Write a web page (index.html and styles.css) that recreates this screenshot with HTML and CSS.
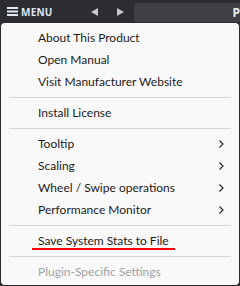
FILE: index.html
```html
<!DOCTYPE html>
<html lang="en">
<head>
    <meta charset="UTF-8">
    <title>Menu</title>
    <link rel="stylesheet" href="styles.css">
</head>
<body>
    <!-- Top bar -->
    <div class="topbar">
        <div class="menu-btn">
            <svg width="11" height="9" viewBox="0 0 11 9"><rect y="0" width="11" height="2" fill="#e2e7f0"/><rect y="3.5" width="11" height="2" fill="#e2e7f0"/><rect y="7" width="11" height="2" fill="#e2e7f0"/></svg>
            <span>MENU</span>
        </div>
        <div class="arrows">
            <svg width="7" height="8" viewBox="0 0 7 8"><polygon points="7,0 7,8 0,4" fill="#c9c9c9"/></svg>
            <svg width="7" height="8" viewBox="0 0 7 8"><polygon points="0,0 0,8 7,4" fill="#c9c9c9"/></svg>
        </div>
        <div class="preset">P</div>
    </div>

    <!-- Dropdown -->
    <div class="menu">
        <div class="item">About This Product</div>
        <div class="item">Open Manual</div>
        <div class="item">Visit Manufacturer Website</div>
        <div class="sep"></div>
        <div class="item">Install License</div>
        <div class="sep"></div>
        <div class="item">Tooltip <svg class="chev" width="5" height="8" viewBox="0 0 5 8"><polyline points="0.5,0.5 4,4 0.5,7.5" fill="none" stroke="#2a2a2a" stroke-width="1.2"/></svg></div>
        <div class="item">Scaling <svg class="chev" width="5" height="8" viewBox="0 0 5 8"><polyline points="0.5,0.5 4,4 0.5,7.5" fill="none" stroke="#2a2a2a" stroke-width="1.2"/></svg></div>
        <div class="item">Wheel / Swipe operations <svg class="chev" width="5" height="8" viewBox="0 0 5 8"><polyline points="0.5,0.5 4,4 0.5,7.5" fill="none" stroke="#2a2a2a" stroke-width="1.2"/></svg></div>
        <div class="item">Performance Monitor <svg class="chev" width="5" height="8" viewBox="0 0 5 8"><polyline points="0.5,0.5 4,4 0.5,7.5" fill="none" stroke="#2a2a2a" stroke-width="1.2"/></svg></div>
        <div class="sep"></div>
        <div class="item"><span class="marked">Save System Stats to File</span></div>
        <div class="sep"></div>
        <div class="item disabled">Plugin-Specific Settings</div>
    </div>
</body>
</html>
```

FILE: styles.css
```css
* {
    margin: 0;
    padding: 0;
    box-sizing: border-box;
}

body {
    width: 240px;
    height: 286px;
    overflow: hidden;
    background: #2c2d31;
    font-family: 'Lato', sans-serif;
}

/* Top bar */
.topbar {
    height: 23px;
    display: flex;
    align-items: center;
}

.menu-btn {
    display: flex;
    align-items: center;
    gap: 3px;
    padding-left: 7px;
    width: 88px;
    font-family: 'Noto Sans', sans-serif;
}

.menu-btn span {
    font-size: 10px;
    font-weight: bold;
    color: #dfe6f2;
    letter-spacing: 0.2px;
}

.arrows {
    display: flex;
    gap: 19px;
    padding-left: 3px;
    width: 46px;
}

.preset {
    flex: 1;
    height: 19px;
    margin-top: 1px;
    background: #3f4044;
    border-radius: 3px 0 0 3px;
    color: #e6ecf5;
    font-family: 'Noto Sans', sans-serif;
    font-size: 12px;
    font-weight: bold;
    line-height: 19px;
    text-align: right;
}

/* Dropdown */
.menu {
    margin: 0 1px;
    height: 262px;
    background: #f9f9f9;
    border-radius: 4px;
    padding-top: 4px;
}

.item {
    height: 22px;
    padding-left: 37px;
    padding-right: 15px;
    padding-bottom: 1px;
    font-size: 12px;
    color: #1b1b1b;
    display: flex;
    align-items: center;
    justify-content: space-between;
}

.item.disabled {
    color: #a3a3a3;
}

.sep {
    height: 9px;
    display: flex;
    align-items: center;
    padding: 0 8px;
}

.sep::before {
    content: "";
    flex: 1;
    height: 1px;
    background: #d6d6d6;
}

.marked {
    position: relative;
}

.marked::after {
    content: "";
    position: absolute;
    left: -6px;
    right: -6px;
    bottom: -2px;
    height: 2px;
    background: #f00;
}
```
